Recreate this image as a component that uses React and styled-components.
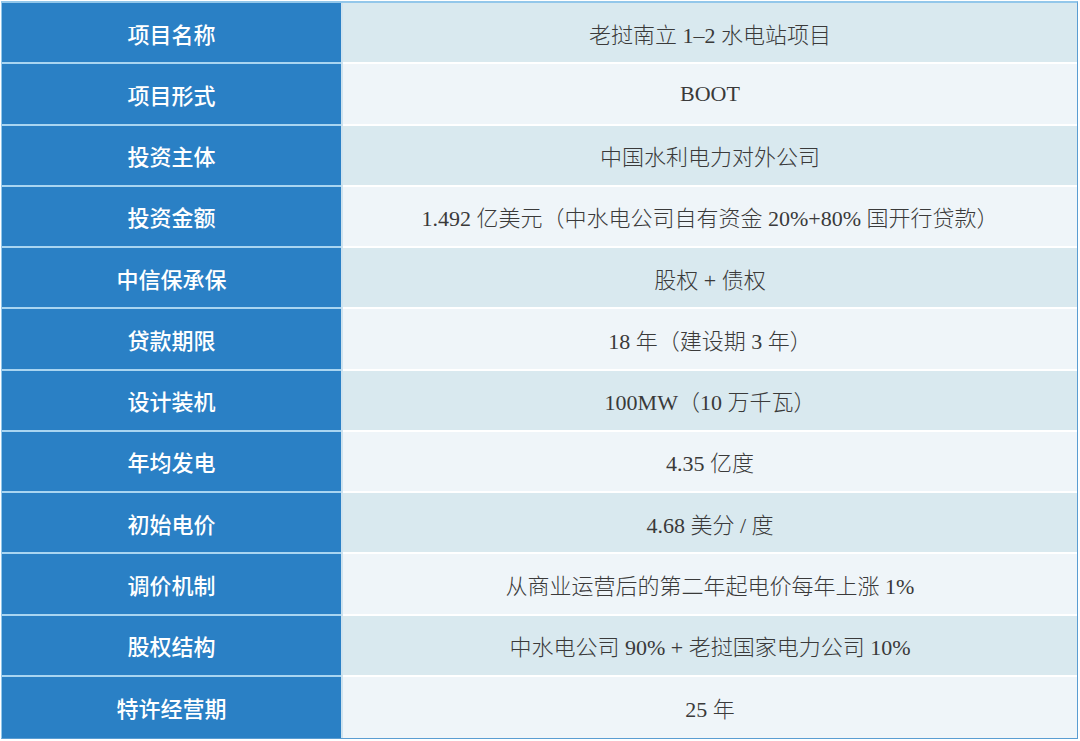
import styled, { createGlobalStyle } from "styled-components";

const GlobalStyle = createGlobalStyle`
  html, body {
    margin: 0;
    padding: 0;
    background: #ffffff;
  }
`;

const Page = styled.div`
  box-sizing: border-box;
  width: 1080px;
  height: 741px;
  padding: 1px 2px 2px 1px;
`;

const Table = styled.div`
  box-sizing: border-box;
  height: 738px;
  display: grid;
  grid-template-rows: repeat(12, 1fr);
  border-top: 2px solid #93c7ea;
  border-left: 1px solid #93c7ea;
  border-right: 1px solid #5a9dd2;
  border-bottom: 1px solid #5a9dd2;
`;

const Row = styled.div`
  display: grid;
  grid-template-columns: 339px 2px 1fr;
`;

const Label = styled.div`
  display: flex;
  align-items: center;
  justify-content: center;
  background: #2a80c5;
  color: #ffffff;
  font-family: "Noto Sans CJK SC", "Noto Sans", sans-serif;
  font-size: 22px;
  font-weight: 500;
  border-bottom: ${(p) => (p.$last ? "none" : "2px solid #a9d5f1")};
`;

const Split = styled.div`
  background: #cfe3ef;
`;

const Value = styled.div`
  display: flex;
  align-items: center;
  justify-content: center;
  background: ${(p) => (p.$odd ? "#d9e9ef" : "#eff5f9")};
  color: #3a3a3a;
  font-family: "Liberation Serif", "Noto Sans CJK SC", serif;
  font-size: 22px;
  font-weight: 300;
  border-bottom: ${(p) => (p.$last ? "none" : "2px solid #ffffff")};
`;

const rows = [
  ["项目名称", "老挝南立 1–2 水电站项目"],
  ["项目形式", "BOOT"],
  ["投资主体", "中国水利电力对外公司"],
  ["投资金额", "1.492 亿美元（中水电公司自有资金 20%+80% 国开行贷款）"],
  ["中信保承保", "股权 + 债权"],
  ["贷款期限", "18 年（建设期 3 年）"],
  ["设计装机", "100MW（10 万千瓦）"],
  ["年均发电", "4.35 亿度"],
  ["初始电价", "4.68 美分 / 度"],
  ["调价机制", "从商业运营后的第二年起电价每年上涨 1%"],
  ["股权结构", "中水电公司 90% + 老挝国家电力公司 10%"],
  ["特许经营期", "25 年"],
];

export default function App() {
  return (
    <>
      <GlobalStyle />
      <Page>
        <Table>
          {rows.map(([label, value], i) => {
            const last = i === rows.length - 1;
            return (
              <Row key={label}>
                <Label $last={last}>{label}</Label>
                <Split />
                <Value $odd={i % 2 === 0} $last={last}>
                  {value}
                </Value>
              </Row>
            );
          })}
        </Table>
      </Page>
    </>
  );
}
